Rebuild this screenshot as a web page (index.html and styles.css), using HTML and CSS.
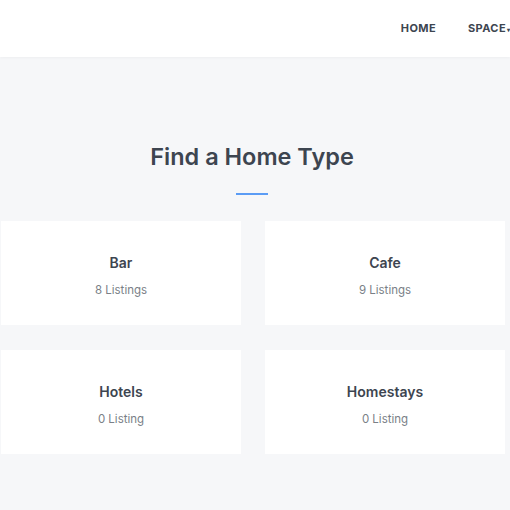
FILE: index.html
```html
<!DOCTYPE html>
<html>
<head>
<meta charset="utf-8">
<link rel="stylesheet" href="styles.css">
</head>
<body>
<header class="topbar">
  <nav class="nav">
    <a class="nav-item">HOME</a>
    <a class="nav-item">SPACE<span class="caret">&#9662;</span></a>
  </nav>
</header>
<main class="section">
  <h2 class="title">Find a Home Type</h2>
  <div class="underline"></div>
  <div class="grid">
    <div class="card"><div class="card-name">Bar</div><div class="card-count">8 Listings</div></div>
    <div class="card"><div class="card-name">Cafe</div><div class="card-count">9 Listings</div></div>
    <div class="card"><div class="card-name">Hotels</div><div class="card-count">0 Listing</div></div>
    <div class="card"><div class="card-name">Homestays</div><div class="card-count">0 Listing</div></div>
  </div>
</main>
</body>
</html>
```

FILE: styles.css
```css
html, body {
  margin: 0;
  padding: 0;
  background: #f6f7f9;
  font-family: "Inter", "Open Sans", sans-serif;
  color: #3d4550;
  overflow: hidden;
}
.topbar {
  height: 57px;
  box-sizing: border-box;
  padding-bottom: 2px;
  background: #ffffff;
  box-shadow: 0 1px 3px rgba(0,0,0,0.04);
  display: flex;
  justify-content: flex-end;
  align-items: center;
}
.nav {
  display: flex;
  gap: 32px;
  margin-right: 0;
}
.nav-item {
  font-size: 11px;
  font-weight: 700;
  color: #3d4550;
  letter-spacing: 0.4px;
}
.caret {
  font-size: 6px;
  margin-left: 1px;
  letter-spacing: 0;
}
.section {
  padding-top: 84px;
  display: flex;
  flex-direction: column;
  align-items: center;
}
.title {
  margin: 0 6px 0 0;
  font-size: 23.5px;
  font-weight: 600;
  line-height: 32px;
  color: #3d4550;
}
.underline {
  width: 32px;
  height: 2px;
  background: #5b9cf5;
  margin: 20px 6px 0 0;
}
.grid {
  display: grid;
  grid-template-columns: 240px 240px;
  column-gap: 24px;
  row-gap: 25px;
  margin: 26px 5px 0 1px;
  align-self: flex-start;
}
.card {
  background: #ffffff;
  height: 104px;
  display: flex;
  flex-direction: column;
  align-items: center;
  padding-top: 33px;
  box-sizing: border-box;
}
.card-name {
  font-size: 14px;
  font-weight: 600;
  line-height: 18px;
  color: #3d4550;
}
.card-count {
  margin-top: 10px;
  font-size: 11.5px;
  line-height: 16px;
  color: #7a7f87;
}
```
